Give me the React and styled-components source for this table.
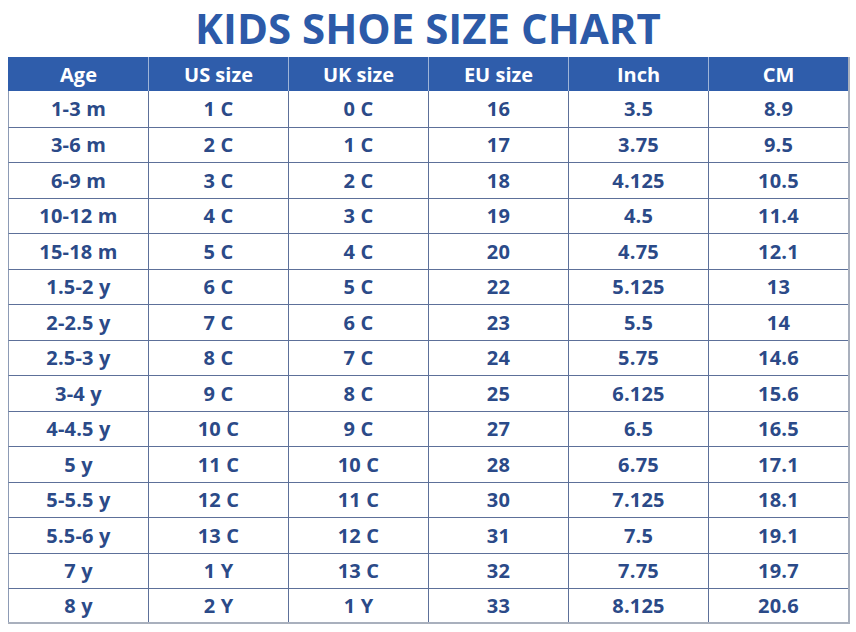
import styled, { createGlobalStyle } from "styled-components";

const GlobalStyle = createGlobalStyle`
  html, body {
    margin: 0;
    padding: 0;
    background: #ffffff;
  }
  body {
    font-family: "Open Sans", "Liberation Sans", sans-serif;
  }
`;

const Page = styled.div`
  width: 856px;
  height: 632px;
  display: flex;
  flex-direction: column;
  align-items: flex-start;
  padding-left: 8px;
  box-sizing: border-box;
  overflow: hidden;
`;

const Title = styled.h1`
  margin: 0;
  width: 840px;
  height: 57px;
  line-height: 56px;
  text-align: center;
  font-size: 42px;
  font-weight: 700;
  color: #2c5aa8;
  white-space: nowrap;
`;

const Table = styled.div`
  width: 840px;
  display: grid;
  grid-template-columns: repeat(6, 140px);
  border-right: 2px solid #a9b0bd;
  border-bottom: 2px solid #a9b0bd;
`;

const HeadCell = styled.div`
  height: 34px;
  background: #2f5dab;
  color: #ffffff;
  font-size: 20px;
  font-weight: 700;
  display: flex;
  align-items: center;
  justify-content: center;
  border-left: 1px solid ${(p) => (p.$first ? "#2f5dab" : "#9fb4d8")};
  box-sizing: border-box;
`;

const Cell = styled.div`
  height: ${(p) => (p.$last ? "33.5px" : "35.5px")};
  color: #2b4a88;
  font-size: 20px;
  font-weight: 700;
  letter-spacing: 0.2px;
  display: flex;
  align-items: center;
  justify-content: center;
  border-left: 1px solid ${(p) => (p.$first ? "#8d9bb5" : "#5d7099")};
  border-top: ${(p) => (p.$top ? "none" : "1px solid #5d7099")};
  box-sizing: border-box;
`;

const headers = ["Age", "US size", "UK size", "EU size", "Inch", "CM"];

const rows = [
  ["1-3 m", "1 C", "0 C", "16", "3.5", "8.9"],
  ["3-6 m", "2 C", "1 C", "17", "3.75", "9.5"],
  ["6-9 m", "3 C", "2 C", "18", "4.125", "10.5"],
  ["10-12 m", "4 C", "3 C", "19", "4.5", "11.4"],
  ["15-18 m", "5 C", "4 C", "20", "4.75", "12.1"],
  ["1.5-2 y", "6 C", "5 C", "22", "5.125", "13"],
  ["2-2.5 y", "7 C", "6 C", "23", "5.5", "14"],
  ["2.5-3 y", "8 C", "7 C", "24", "5.75", "14.6"],
  ["3-4 y", "9 C", "8 C", "25", "6.125", "15.6"],
  ["4-4.5 y", "10 C", "9 C", "27", "6.5", "16.5"],
  ["5 y", "11 C", "10 C", "28", "6.75", "17.1"],
  ["5-5.5 y", "12 C", "11 C", "30", "7.125", "18.1"],
  ["5.5-6 y", "13 C", "12 C", "31", "7.5", "19.1"],
  ["7 y", "1 Y", "13 C", "32", "7.75", "19.7"],
  ["8 y", "2 Y", "1 Y", "33", "8.125", "20.6"],
];

export default function App() {
  return (
    <Page>
      <GlobalStyle />
      <Title>KIDS SHOE SIZE CHART</Title>
      <Table>
        {headers.map((h, i) => (
          <HeadCell key={h} $first={i === 0}>
            {h}
          </HeadCell>
        ))}
        {rows.map((row, r) =>
          row.map((v, c) => (
            <Cell
              key={r + "-" + c}
              $first={c === 0}
              $top={r === 0}
              $last={r === rows.length - 1}
            >
              {v}
            </Cell>
          ))
        )}
      </Table>
    </Page>
  );
}
